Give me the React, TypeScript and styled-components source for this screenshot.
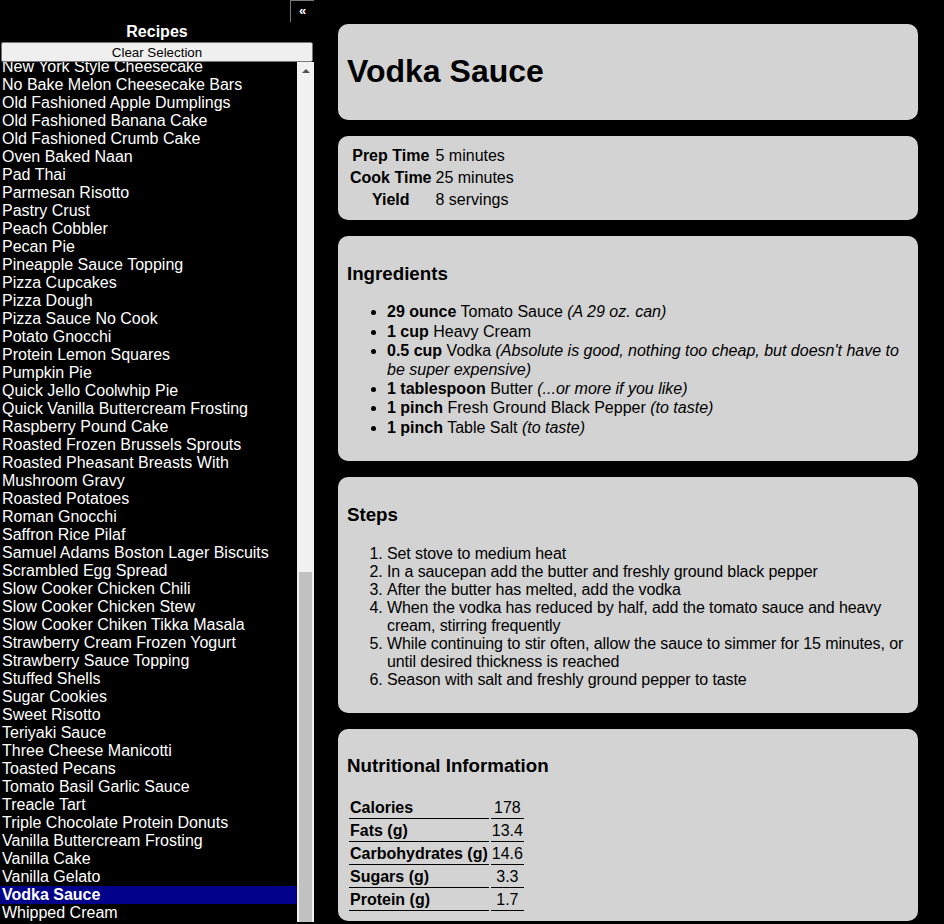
import { useLayoutEffect, useRef, useState } from 'react';
import styled, { createGlobalStyle } from 'styled-components';

const GlobalStyle = createGlobalStyle`
  html, body {
    margin: 0;
    padding: 0;
    background-color: #000;
    font-family: 'Liberation Sans', Arial, sans-serif;
    font-size: 16px;
  }
`;

const Page = styled.div`
  display: flex;
  height: 100vh;
  overflow: hidden;
  background-color: #000;
`;

const Sidebar = styled.aside`
  width: 314px;
  flex-shrink: 0;
  display: flex;
  flex-direction: column;
  height: 100%;
  color: white;
`;

const TopBar = styled.div`
  display: flex;
  justify-content: flex-end;
  height: 22px;
`;

const CollapseButton = styled.button`
  width: 24px;
  height: 22px;
  padding: 0 0 2px 0;
  background-color: #000;
  color: white;
  border: none;
  border-top: 1px solid #7a7a7a;
  border-left: 1px solid #7a7a7a;
  font-family: 'Liberation Sans', Arial, sans-serif;
  font-weight: 700;
  font-size: 13px;
  line-height: 1;
`;

const SidebarTitle = styled.h2`
  margin: 0;
  height: 20px;
  line-height: 20px;
  text-align: center;
  font-size: 16px;
  font-weight: 700;
`;

const ClearButton = styled.button`
  margin: 0 1px;
  height: 20px;
  padding: 0;
  background-color: #efefef;
  border: 1px solid #767676;
  border-radius: 2px;
  color: #000;
  font-family: 'Liberation Sans', Arial, sans-serif;
  font-size: 13.33px;
`;

const ListArea = styled.div`
  flex: 1;
  min-height: 0;
  display: flex;
  margin-bottom: 2px;
`;

const RecipeList = styled.ul`
  flex: 1;
  min-width: 0;
  margin: 0;
  padding: 0;
  list-style: none;
  overflow: hidden;
  background-color: #000;
`;

const ScrollTrack = styled.div`
  width: 17px;
  flex-shrink: 0;
  display: flex;
  flex-direction: column;
  background-color: #f1f1f1;
`;

const ScrollArrow = styled.div`
  height: 17px;
  flex-shrink: 0;
  display: flex;
  justify-content: center;
  align-items: center;
  &::after {
    content: '';
    width: 0;
    height: 0;
    border-left: 4px solid transparent;
    border-right: 4px solid transparent;
    border-bottom: 4px solid #505050;
  }
`;

const ThumbRail = styled.div`
  flex: 1;
  position: relative;
`;

const Thumb = styled.div`
  position: absolute;
  left: 2px;
  right: 2px;
  background-color: #c1c1c1;
`;

const RecipeItem = styled.li<{ $selected?: boolean }>`
  padding: 0 2px;
  line-height: 18px;
  font-size: 16px;
  color: white;
  cursor: pointer;
  background-color: ${(p) => (p.$selected ? '#00008b' : 'transparent')};
  font-weight: ${(p) => (p.$selected ? 700 : 400)};
`;

const Main = styled.main`
  flex: 1;
  min-width: 0;
  display: flex;
  flex-direction: column;
  gap: 16px;
  padding: 24px 26px 0 24px;
  overflow: hidden;
`;

const Card = styled.section`
  background-color: #d3d3d3;
  border-radius: 10px;
  padding: 8px 9px;
  color: #000;
`;

const Title = styled.h1`
  margin: 21.44px 0;
  font-size: 32px;
  font-weight: 700;
`;

const SectionTitle = styled.h3`
  margin: 18.72px 0;
  font-size: 18.72px;
  font-weight: 700;
`;

const InfoTable = styled.table`
  border-spacing: 2px;
  th {
    padding: 1px;
    font-weight: 700;
    text-align: center;
    line-height: 18px;
  }
  td {
    padding: 1px;
    text-align: left;
    line-height: 18px;
  }
`;

const IngredientList = styled.ul`
  margin: 16px 0;
  padding-left: 40px;
  li {
    line-height: 18.4px;
    margin-bottom: 1px;
  }
`;

const Amount = styled.strong`
  font-weight: 700;
`;

const Note = styled.em`
  font-style: italic;
`;

const StepList = styled.ol`
  margin: 16px 0;
  padding-left: 40px;
  li {
    line-height: 18px;
    letter-spacing: -0.1px;
  }
`;

const NutritionTable = styled.table`
  border-spacing: 2px;
  th {
    padding: 1px;
    text-align: left;
    font-weight: 700;
    line-height: 18px;
    border-bottom: 1px solid #000;
  }
  td {
    padding: 1px;
    text-align: center;
    line-height: 18px;
    border-bottom: 1px solid #000;
  }
`;

const recipes = [
  'Alfredo Sauce',
  'Almond Biscotti',
  'Angel Food Cake',
  'Apple Crisp',
  'Apple Pie',
  'Baked Ziti',
  'Banana Bread',
  'Banana Cream Pie',
  'Basic Pancakes',
  'Beef Stroganoff',
  'Blueberry Muffins',
  'Boston Cream Pie',
  'Bread Pudding',
  'Brownies',
  'Buttermilk Biscuits',
  'Butternut Squash Soup',
  'Caesar Dressing',
  'Carrot Cake',
  'Cheddar Biscuits',
  'Cherry Pie',
  'Chicken Alfredo',
  'Chicken Noodle Soup',
  'Chicken Pot Pie',
  'Chili',
  'Chocolate Chip Cookies',
  'Chocolate Mousse',
  'Cinnamon Rolls',
  'Classic Meatloaf',
  'Coconut Cream Pie',
  'Corn Bread',
  'Cream Cheese Frosting',
  'Creme Brulee',
  'Deviled Eggs',
  'Dinner Rolls',
  'Egg Fried Rice',
  'Eggplant Parmesan',
  'French Onion Soup',
  'French Toast',
  'Garlic Bread',
  'German Chocolate Cake',
  'Gingerbread Cookies',
  'Granola',
  'Greek Salad',
  'Guacamole',
  'Hash Browns',
  'Homemade Pasta',
  'Honey Garlic Chicken',
  'Hot Fudge Sauce',
  'Hummus',
  'Irish Soda Bread',
  'Italian Meatballs',
  'Jalapeno Poppers',
  'Key Lime Pie',
  'Lasagna',
  'Lemon Bars',
  'Lemon Meringue Pie',
  'Macaroni and Cheese',
  'Mango Salsa',
  'Maple Glazed Carrots',
  'Marinara Sauce',
  'Mashed Potatoes',
  'Meatball Subs',
  'Minestrone Soup',
  'Mississippi Mud Pie',
  'Molasses Cookies',
  'Monkey Bread',
  'Mushroom Risotto',
  'New York Style Cheesecake',
  'No Bake Melon Cheesecake Bars',
  'Old Fashioned Apple Dumplings',
  'Old Fashioned Banana Cake',
  'Old Fashioned Crumb Cake',
  'Oven Baked Naan',
  'Pad Thai',
  'Parmesan Risotto',
  'Pastry Crust',
  'Peach Cobbler',
  'Pecan Pie',
  'Pineapple Sauce Topping',
  'Pizza Cupcakes',
  'Pizza Dough',
  'Pizza Sauce No Cook',
  'Potato Gnocchi',
  'Protein Lemon Squares',
  'Pumpkin Pie',
  'Quick Jello Coolwhip Pie',
  'Quick Vanilla Buttercream Frosting',
  'Raspberry Pound Cake',
  'Roasted Frozen Brussels Sprouts',
  'Roasted Pheasant Breasts With Mushroom Gravy',
  'Roasted Potatoes',
  'Roman Gnocchi',
  'Saffron Rice Pilaf',
  'Samuel Adams Boston Lager Biscuits',
  'Scrambled Egg Spread',
  'Slow Cooker Chicken Chili',
  'Slow Cooker Chicken Stew',
  'Slow Cooker Chiken Tikka Masala',
  'Strawberry Cream Frozen Yogurt',
  'Strawberry Sauce Topping',
  'Stuffed Shells',
  'Sugar Cookies',
  'Sweet Risotto',
  'Teriyaki Sauce',
  'Three Cheese Manicotti',
  'Toasted Pecans',
  'Tomato Basil Garlic Sauce',
  'Treacle Tart',
  'Triple Chocolate Protein Donuts',
  'Vanilla Buttercream Frosting',
  'Vanilla Cake',
  'Vanilla Gelato',
  'Vodka Sauce',
  'Whipped Cream',
];

const ingredients = [
  { amount: '29 ounce', name: 'Tomato Sauce', note: '(A 29 oz. can)' },
  { amount: '1 cup', name: 'Heavy Cream' },
  {
    amount: '0.5 cup',
    name: 'Vodka',
    note: "(Absolute is good, nothing too cheap, but doesn't have to be super expensive)",
  },
  { amount: '1 tablespoon', name: 'Butter', note: '(...or more if you like)' },
  { amount: '1 pinch', name: 'Fresh Ground Black Pepper', note: '(to taste)' },
  { amount: '1 pinch', name: 'Table Salt', note: '(to taste)' },
];

const steps = [
  'Set stove to medium heat',
  'In a saucepan add the butter and freshly ground black pepper',
  'After the butter has melted, add the vodka',
  'When the vodka has reduced by half, add the tomato sauce and heavy cream, stirring frequently',
  'While continuing to stir often, allow the sauce to simmer for 15 minutes, or until desired thickness is reached',
  'Season with salt and freshly ground pepper to taste',
];

const nutrition = [
  ['Calories', '178'],
  ['Fats (g)', '13.4'],
  ['Carbohydrates (g)', '14.6'],
  ['Sugars (g)', '3.3'],
  ['Protein (g)', '1.7'],
];

const App = () => {
  const listRef = useRef<HTMLUListElement>(null);
  const anchorRef = useRef<HTMLLIElement>(null);
  const railRef = useRef<HTMLDivElement>(null);
  const [thumb, setThumb] = useState({ top: 0, height: 0 });

  useLayoutEffect(() => {
    const list = listRef.current;
    const anchor = anchorRef.current;
    const rail = railRef.current;
    if (!list || !anchor || !rail) return;
    const offset =
      anchor.getBoundingClientRect().top -
      list.getBoundingClientRect().top +
      list.scrollTop;
    list.scrollTop = offset - 14;
    const railH = rail.clientHeight;
    setThumb({
      top: (list.scrollTop / list.scrollHeight) * railH,
      height: (list.clientHeight / list.scrollHeight) * railH,
    });
  }, []);

  return (
    <Page>
      <GlobalStyle />
      <Sidebar>
        <TopBar>
          <CollapseButton>«</CollapseButton>
        </TopBar>
        <SidebarTitle>Recipes</SidebarTitle>
        <ClearButton>Clear Selection</ClearButton>
        <ListArea>
          <RecipeList ref={listRef}>
            {recipes.map((r) => (
              <RecipeItem
                key={r}
                ref={r === 'No Bake Melon Cheesecake Bars' ? anchorRef : undefined}
                $selected={r === 'Vodka Sauce'}
              >
                {r}
              </RecipeItem>
            ))}
          </RecipeList>
          <ScrollTrack>
            <ScrollArrow />
            <ThumbRail ref={railRef}>
              <Thumb style={{ top: thumb.top, height: thumb.height }} />
            </ThumbRail>
          </ScrollTrack>
        </ListArea>
      </Sidebar>
      <Main>
        <Card>
          <Title>Vodka Sauce</Title>
        </Card>
        <Card>
          <InfoTable>
            <tbody>
              <tr>
                <th>Prep Time</th>
                <td>5 minutes</td>
              </tr>
              <tr>
                <th>Cook Time</th>
                <td>25 minutes</td>
              </tr>
              <tr>
                <th>Yield</th>
                <td>8 servings</td>
              </tr>
            </tbody>
          </InfoTable>
        </Card>
        <Card>
          <SectionTitle>Ingredients</SectionTitle>
          <IngredientList>
            {ingredients.map((i, idx) => (
              <li key={idx}>
                <Amount>{i.amount}</Amount> {i.name}
                {i.note && (
                  <>
                    {' '}
                    <Note>{i.note}</Note>
                  </>
                )}
              </li>
            ))}
          </IngredientList>
        </Card>
        <Card>
          <SectionTitle>Steps</SectionTitle>
          <StepList>
            {steps.map((s, idx) => (
              <li key={idx}>{s}</li>
            ))}
          </StepList>
        </Card>
        <Card>
          <SectionTitle>Nutritional Information</SectionTitle>
          <NutritionTable>
            <tbody>
              {nutrition.map(([label, value]) => (
                <tr key={label}>
                  <th>{label}</th>
                  <td>{value}</td>
                </tr>
              ))}
            </tbody>
          </NutritionTable>
        </Card>
      </Main>
    </Page>
  );
};

export default App;
